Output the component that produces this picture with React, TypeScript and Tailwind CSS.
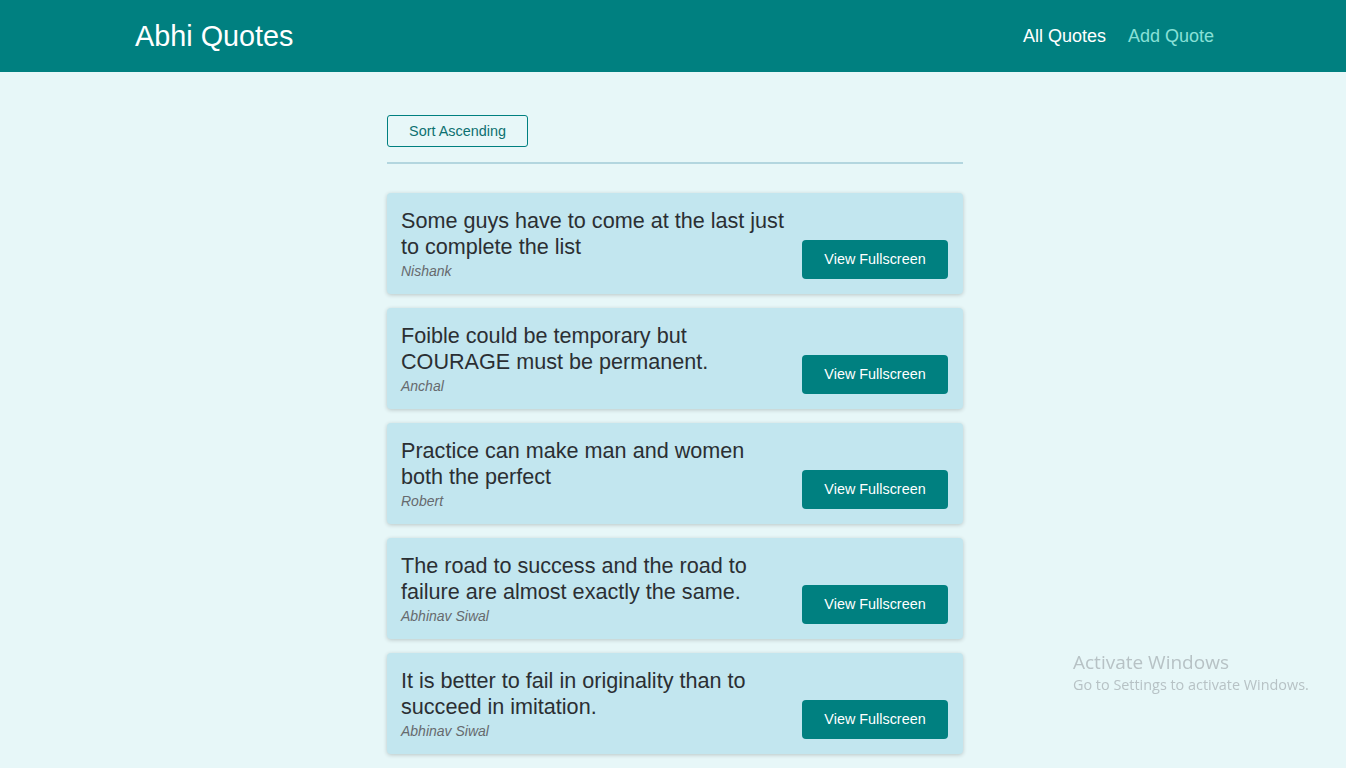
import React from "react";

const quotes = [
  { text: "Some guys have to come at the last just to complete the list", author: "Nishank" },
  { text: "Foible could be temporary but COURAGE must be permanent.", author: "Anchal" },
  { text: "Practice can make man and women both the perfect", author: "Robert" },
  { text: "The road to success and the road to failure are almost exactly the same.", author: "Abhinav Siwal" },
  { text: "It is better to fail in originality than to succeed in imitation.", author: "Abhinav Siwal" },
];

export default function App() {
  return (
    <div className="min-h-screen bg-[#e7f7f8] font-['Liberation_Sans',Arial,sans-serif] relative">
      <header className="h-[72px] bg-[#008080] flex items-center justify-between pl-[135px] pr-[132px]">
        <div className="text-white text-[28.8px] leading-none">Abhi Quotes</div>
        <nav className="flex gap-[22px] text-[18px]">
          <span className="text-white">All Quotes</span>
          <span className="text-[#88e0d7]">Add Quote</span>
        </nav>
      </header>
      <main className="w-[576px] mx-auto pt-[43px] pb-10 pl-[4px] box-content">
        <div>
          <button className="h-[32px] w-[141px] pt-[1px] border border-[#008080] rounded-[3px] text-[14.4px] text-[#0d7070] bg-transparent">
            Sort Ascending
          </button>
        </div>
        <div className="mt-[15px] h-[2px] bg-[#b3d6df]" />
        <ul className="mt-[29px] flex flex-col gap-[14px]">
          {quotes.map((q, i) => (
            <li
              key={i}
              className="bg-[#c2e6ef] rounded-[4px] shadow-[0_1px_4px_rgba(0,0,0,0.2)] pl-[14px] pr-[15px] pt-[15px] pb-[15px] flex items-end justify-between gap-[16px] h-[101px]"
            >
              <figure className="flex-1 self-start">
                <blockquote className="text-[21.6px] leading-[26px] text-[#2b2f33]">{q.text}</blockquote>
                <figcaption className="text-[14px] leading-[22px] italic text-[#666a6e]">{q.author}</figcaption>
              </figure>
              <button className="shrink-0 w-[146px] h-[39px] pt-[1px] bg-[#008080] text-white text-[14.4px] rounded-[4px]">
                View Fullscreen
              </button>
            </li>
          ))}
        </ul>
      </main>
      <div className="fixed left-[1073px] top-[650px] font-['Open_Sans',sans-serif] text-[#b7c2c5] pointer-events-none">
        <div className="text-[19px] leading-[24px]">Activate Windows</div>
        <div className="text-[14.4px] leading-[20px] mt-[1px]">Go to Settings to activate Windows.</div>
      </div>
    </div>
  );
}
